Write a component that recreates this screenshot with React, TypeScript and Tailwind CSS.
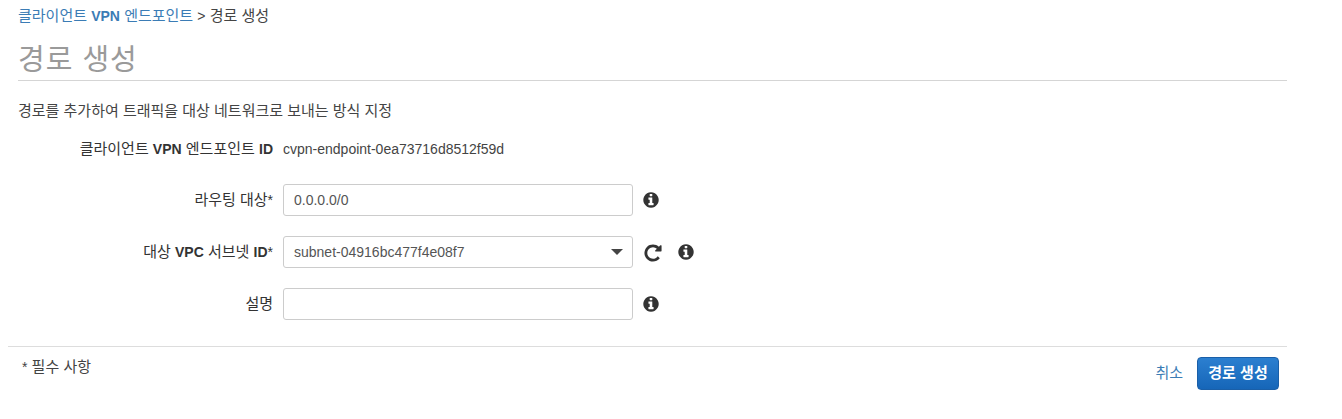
const font = "font-['Liberation_Sans','Noto_Sans_CJK_KR',sans-serif]";

// latin runs sit at 14px, hangul at 15px to get the reference's widths
function L({ children, bold }: { children: React.ReactNode; bold?: boolean }) {
    return <span className={bold ? "text-[14px] font-bold" : "text-[14px]"}>{children}</span>;
}

function Info() {
    return (
        <svg viewBox="0 0 1792 1792" className="w-[18px] h-[18px] shrink-0" fill="#333333">
            <path d="M1152 1376v-160q0-14-9-23t-23-9h-96v-512q0-14-9-23t-23-9h-320q-14 0-23 9t-9 23v160q0 14 9 23t23 9h96v320h-96q-14 0-23 9t-9 23v160q0 14 9 23t23 9h448q14 0 23-9t9-23zm-128-896v-160q0-14-9-23t-23-9h-192q-14 0-23 9t-9 23v160q0 14 9 23t23 9h192q14 0 23-9t9-23zm640 416q0 209-103 385.500t-279.500 279.500-385.500 103-385.500-103-279.500-279.500-103-385.500 103-385.500 279.500-279.500 385.500-103 385.500 103 279.500 279.500 103 385.500z" />
        </svg>
    );
}

function Repeat() {
    return (
        <svg viewBox="0 0 1792 1792" className="w-[20px] h-[20px] shrink-0 ml-[1px] mt-[2px]" fill="#333333">
            <path d="M1664 256v448q0 26-19 45t-45 19h-448q-42 0-59-40-17-39 14-69l138-138q-148-137-349-137-104 0-198.500 40.500t-163.500 109.500-109.500 163.500-40.500 198.500 40.500 198.500 109.500 163.500 163.500 109.500 198.500 40.500q119 0 225-52t179-147q7-10 23-12 15 0 25 9l137 138q9 8 9.500 20.500t-7.500 22.500q-109 132-264 204.500t-327 72.500q-156 0-298-61t-245-164-164-245-61-298 61-298 164-245 245-164 298-61q147 0 284.500 55.500t244.500 156.500l130-129q29-31 70-14 39 17 39 59z" />
        </svg>
    );
}

function Row({ label, req, children, icons }: { label: React.ReactNode; req?: boolean; children: React.ReactNode; icons: React.ReactNode }) {
    return (
        <div className="flex items-center h-8">
            <label className="w-[255px] text-right text-[15px] text-[#333333] whitespace-nowrap">
                {label}{req && <span className="text-[14px]">*</span>}
            </label>
            <div className="ml-[10px] w-[350px]">{children}</div>
            <div className="flex items-center ml-[9px] gap-[14px]">{icons}</div>
        </div>
    );
}

export default function App() {
    return (
        <div className={`w-[1342px] h-[419px] overflow-hidden bg-white text-[#444444] ${font}`}>
            <div className="pl-[18px] pr-[55px]">
                <div className="pt-[7px] h-[30px] text-[15px] leading-[18px] whitespace-nowrap">
                    <a className="text-[#3b7cb5]">클라이언트 <L bold>VPN</L> 엔드포인트</a>
                    <span> <L>&gt;</L> 경로 생성</span>
                </div>
                <h1 className="h-[51px] border-b border-[#d5d5d5] text-[29px] leading-[60px] text-[#9a9a9a] tracking-[1px]">경로 생성</h1>
                <p className="mt-[21px] text-[15px] leading-[18px]">경로를 추가하여 트래픽을 대상 네트워크로 보내는 방식 지정</p>
                <div className="flex items-center mt-[19px] h-5">
                    <div className="w-[255px] text-right text-[15px] text-[#333333] whitespace-nowrap">클라이언트 <L bold>VPN</L> 엔드포인트 <L bold>ID</L></div>
                    <div className="ml-[10px] text-[14px] whitespace-nowrap">cvpn-endpoint-0ea73716d8512f59d</div>
                </div>
                <div className="mt-[25px] flex flex-col gap-5">
                    <Row label="라우팅 대상" req icons={<Info />}>
                        <input readOnly value="0.0.0.0/0" className="w-full h-8 rounded-[3px] border border-[#cccccc] px-[10px] text-[14px] text-[#555555] outline-none" />
                    </Row>
                    <Row label={<>대상 <L bold>VPC</L> 서브넷 <L bold>ID</L></>} req icons={<><Repeat /><Info /></>}>
                        <div className="w-full h-8 rounded-[3px] border border-[#cccccc] pl-[10px] pr-[9px] flex items-center justify-between text-[14px] text-[#555555]">
                            <span>subnet-04916bc477f4e08f7</span>
                            <span className="w-0 h-0 border-x-[6px] border-x-transparent border-t-[6px] border-t-[#444444]" />
                        </div>
                    </Row>
                    <Row label="설명" icons={<Info />}>
                        <input readOnly className="w-full h-8 rounded-[3px] border border-[#cccccc] px-[10px] text-[14px] outline-none" />
                    </Row>
                </div>
            </div>
            <div className="ml-[8px] mr-[55px] mt-[26px] border-t border-[#dddddd] flex justify-between">
                <div className="pl-[14px] pt-[11px] text-[15px] leading-[18px]"><L>*</L> 필수 사항</div>
                <div className="flex items-center gap-[14px] pt-[10px] pr-[8px]">
                    <a className="text-[15px] text-[#3b7cb5]">취소</a>
                    <button className="h-[33px] w-[82px] rounded-[4px] border border-[#1a5fa8] bg-gradient-to-b from-[#2b7fd0] to-[#1666b8] text-[15px] font-bold text-white">경로 생성</button>
                </div>
            </div>
        </div>
    );
}
